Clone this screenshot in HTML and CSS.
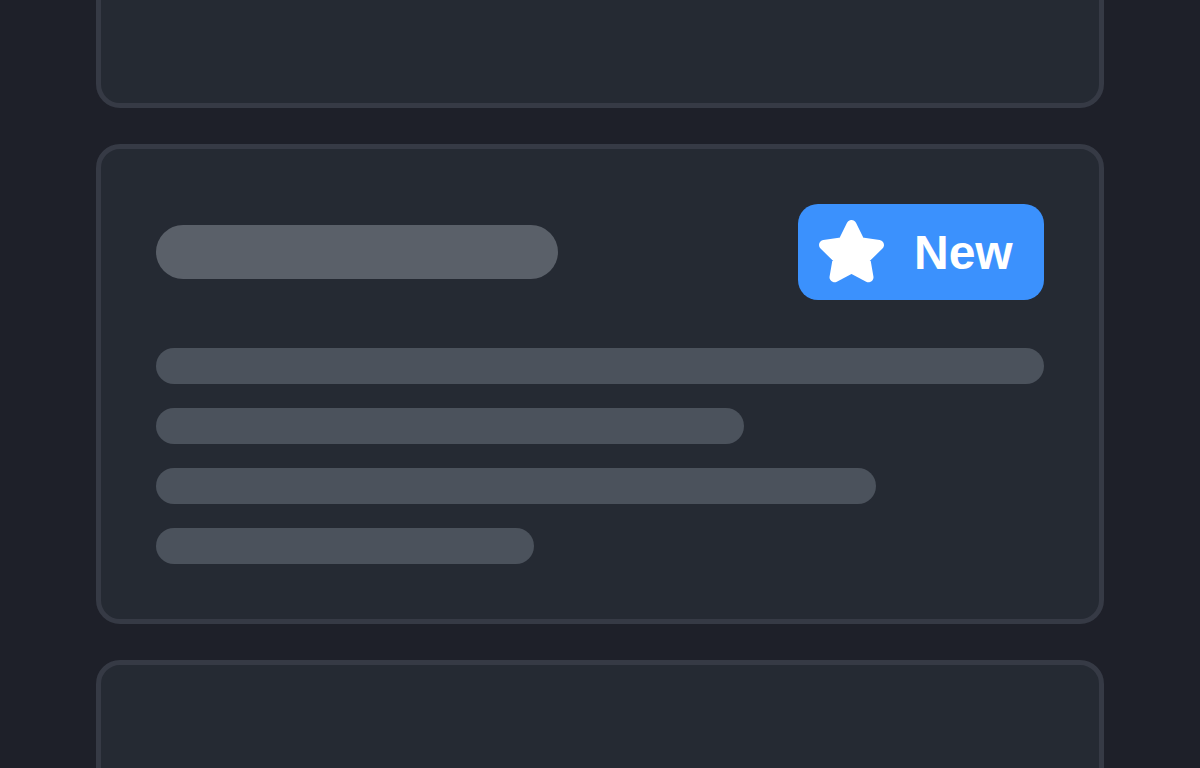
FILE: index.html
```html
<!DOCTYPE html>
<html lang="en">
<head>
    <meta charset="UTF-8">
    <meta name="viewport" content="width=device-width, initial-scale=1.0">
    <title>Card skeleton</title>
    <link rel="stylesheet" href="styles.css">
</head>
<body>
    <div class="feed">
        <div class="card card-above"></div>

        <div class="card">
            <div class="card-head">
                <div class="skel-title"></div>
                <div class="badge">
                    <svg class="badge-star" width="66" height="64" viewBox="0 0 66 64" aria-hidden="true">
                        <polygon points="32.5,5 41,22.2 60,25 46.2,38.4 49.5,57.3 32.5,48.4 15.5,57.3 18.8,38.4 5,25 24,22.2"
                                 fill="#ffffff" stroke="#ffffff" stroke-width="10" stroke-linejoin="round"/>
                    </svg>
                    <span class="badge-label">New</span>
                </div>
            </div>
            <div class="skel-lines">
                <div class="skel-line line-full"></div>
                <div class="skel-line line-2"></div>
                <div class="skel-line line-3"></div>
                <div class="skel-line line-4"></div>
            </div>
        </div>

        <div class="card"></div>
    </div>
</body>
</html>
```

FILE: styles.css
```css
html, body {
    overflow: hidden;
}

body {
    margin: 0;
    background: #1e2029;
    font-family: "Liberation Sans", Arial, sans-serif;
    color: #ffffff;
}

.feed {
    width: 1008px;
    margin: 0 auto;
    display: flex;
    flex-direction: column;
    gap: 36px;
}

.card {
    box-sizing: border-box;
    height: 480px;
    flex-shrink: 0;
    background: #252a33;
    border: 5px solid #363a45;
    border-radius: 24px;
    padding: 55px;
}

/* the card scrolled mostly out of view */
.card-above {
    margin-top: -372px;
}

.card-head {
    height: 96px;
    display: flex;
    align-items: center;
    justify-content: space-between;
}

.skel-title {
    width: 402px;
    height: 54px;
    border-radius: 27px;
    background: #5a6069;
}

.badge {
    box-sizing: border-box;
    height: 96px;
    width: 246px;
    padding: 0 0 0 21px;
    display: flex;
    align-items: center;
    gap: 29px;
    background: #3b91fd;
    border-radius: 20px;
}

.badge-star {
    display: block;
    flex-shrink: 0;
}

.badge-label {
    font-size: 48px;
    font-weight: bold;
    line-height: 48px;
    padding-top: 2px;
}

.skel-lines {
    margin-top: 48px;
    display: flex;
    flex-direction: column;
    gap: 24px;
}

.skel-line {
    height: 36px;
    border-radius: 18px;
    background: #4b525c;
}

.line-full { width: 100%; }
.line-2 { width: 588px; }
.line-3 { width: 720px; }
.line-4 { width: 378px; }
```
